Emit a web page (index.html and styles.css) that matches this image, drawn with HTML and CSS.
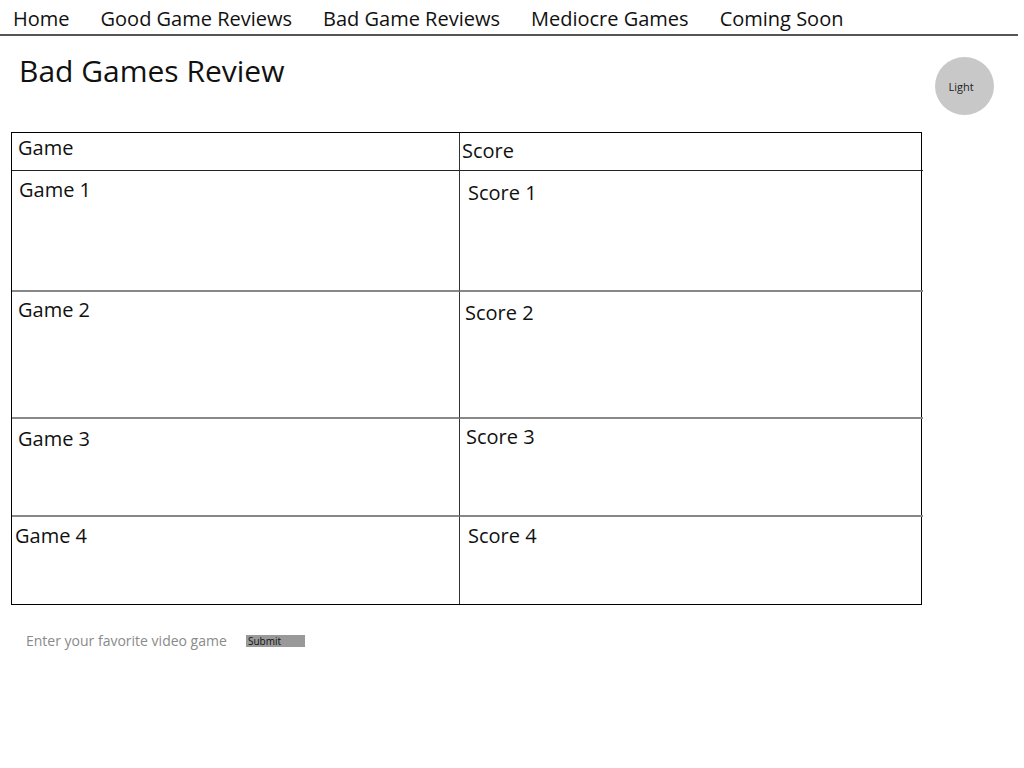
FILE: index.html
```html
<!DOCTYPE html>
<html>
<head>
<meta charset="utf-8">
<title>Bad Games Review</title>
<link rel="stylesheet" href="styles.css">
</head>
<body>
<nav class="nav">
  <a class="nav-link" href="#">Home</a>
  <a class="nav-link" href="#">Good Game Reviews</a>
  <a class="nav-link" href="#">Bad Game Reviews</a>
  <a class="nav-link" href="#">Mediocre Games</a>
  <a class="nav-link" href="#">Coming Soon</a>
</nav>
<header class="page-head">
  <h1 class="title">Bad Games Review</h1>
  <button class="theme-btn" type="button">Light</button>
</header>
<main class="content">
  <div class="review-table">
    <div class="cell head game">Game</div>
    <div class="cell head score">Score</div>
    <div class="cell game r1">Game 1</div>
    <div class="cell score r1">Score 1</div>
    <div class="cell game r2">Game 2</div>
    <div class="cell score r2">Score 2</div>
    <div class="cell game r3">Game 3</div>
    <div class="cell score r3">Score 3</div>
    <div class="cell game last">Game 4</div>
    <div class="cell score last">Score 4</div>
  </div>
  <form class="fav-form">
    <input class="fav-input" type="text" placeholder="Enter your favorite video game">
    <button class="submit-btn" type="button">Submit</button>
  </form>
</main>
</body>
</html>
```
FILE: styles.css
```css
* { box-sizing: border-box; }
body {
  margin: 0;
  font-family: "Open Sans", "Liberation Sans", sans-serif;
  color: #111;
  background: #fff;
}
.nav {
  display: flex;
  gap: 31px;
  padding: 5px 0 2px 13px;
  width: 1018px;
  border-bottom: 2px solid #555;
}
.nav-link {
  font-size: 20px;
  color: #111;
  text-decoration: none;
  line-height: 27px;
}
.page-head {
  display: flex;
  justify-content: space-between;
  align-items: flex-start;
  padding: 14px 30px 0 19px;
}
.title {
  margin: 0;
  font-size: 30px;
  font-weight: 400;
  line-height: 41px;
}
.theme-btn {
  margin-top: 7px;
  width: 59px;
  height: 58px;
  border-radius: 50%;
  border: none;
  background: #c8c8c8;
  font-family: inherit;
  font-size: 11px;
  color: #222;
  padding: 0 7px 0 0;
}
.content {
  padding: 17px 0 0 11px;
}
.review-table {
  display: grid;
  grid-template-columns: 448px 463px;
  grid-template-rows: 38px 121px 127px 98px 87px;
  width: 911px;
  border: 1px solid #000;
}
.cell {
  font-size: 20px;
  line-height: 27px;
  padding: 4px 6px 0;
}
.game { border-right: 1px solid #333; }
.head { padding-top: 1px; border-bottom: 1px solid #222; }
.head.score { padding-top: 4px; padding-left: 2px; }
.r1, .r2, .r3 { border-bottom: 2px solid #888; }
.game.r1 { padding-left: 7px; padding-top: 5px; }
.score.r1 { padding-left: 8px; padding-top: 8px; }
.score.r2 { padding-left: 5px; padding-top: 7px; }
.game.r3 { padding-top: 6px; }
.score.r3 { padding-left: 6px; padding-top: 4px; }
.game.last { padding-left: 3px; padding-top: 5px; }
.score.last { padding-left: 8px; padding-top: 5px; }
.fav-form {
  display: flex;
  align-items: center;
  gap: 0;
  margin-top: 26px;
  padding-left: 15px;
}
.fav-input {
  width: 220px;
  border: none;
  outline: none;
  padding: 0;
  font-family: inherit;
  font-size: 14px;
  line-height: 19px;
  color: #333;
  background: transparent;
}
.fav-input::placeholder { color: #8a8a8a; }
.submit-btn {
  width: 59px;
  height: 12px;
  padding: 0 0 0 2px;
  border: none;
  background: #999;
  font-family: inherit;
  font-size: 10px;
  line-height: 12px;
  text-align: left;
  color: #111;
}
```
